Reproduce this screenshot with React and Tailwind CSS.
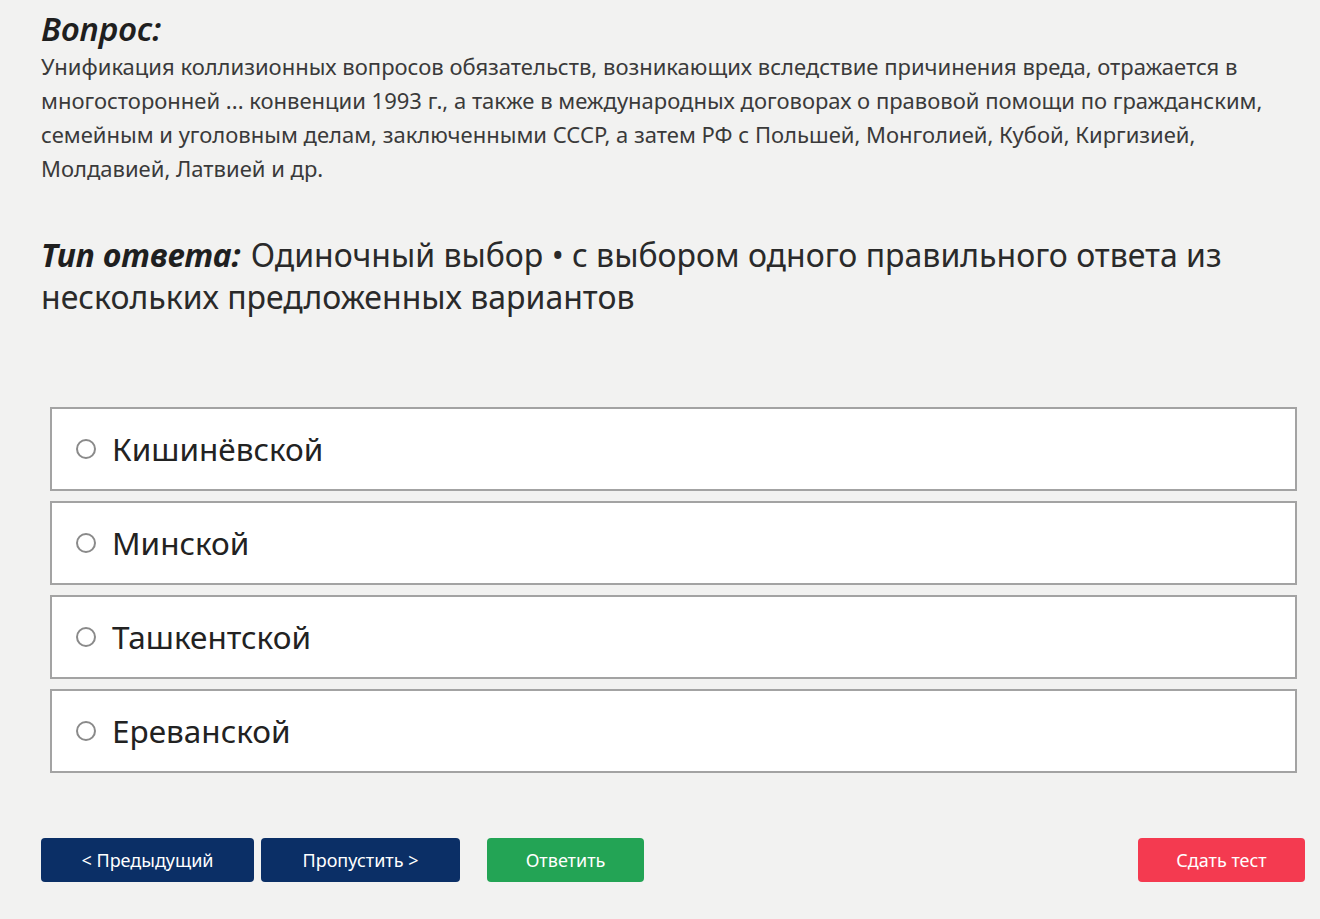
import React from 'react';

const options = ['Кишинёвской', 'Минской', 'Ташкентской', 'Ереванской'];

const Option = ({ label }) => {
  return (
    <label className="flex items-center h-[84px] bg-white border-2 border-[#a3a3a3] pl-[24px] cursor-pointer">
      <span className="w-[20px] h-[20px] rounded-full border-2 border-[#8a8a8a] bg-white shrink-0" />
      <span className="ml-[16px] text-[31.5px] text-[#222]">{label}</span>
    </label>
  );
};

const App = () => {
  return (
    <div className="min-h-[919px] bg-[#f2f2f1] font-['Noto_Sans',sans-serif] text-[#262626] px-[41px] pt-[9px]">
      <h2 className="text-[33px] font-semibold italic leading-[40px] text-[#1f1f1f]">Вопрос:</h2>
      <p className="text-[22px] leading-[34px] text-[#3a3a3a] max-w-[1240px]">
        Унификация коллизионных вопросов обязательств, возникающих вследствие причинения вреда, отражается в многосторонней ... конвенции 1993 г., а также в международных договорах о правовой помощи по гражданским, семейным и уголовным делам, заключенными СССР, а затем РФ с Польшей, Монголией, Кубой, Киргизией, Молдавией, Латвией и др.
      </p>

      <div className="mt-[49px] text-[32px] leading-[42px] text-[#2a2a2a]">
        <div className="flex">
          <span className="font-bold italic text-[#1f1f1f]">Тип ответа:</span>
          <span className="ml-[10px]">Одиночный выбор • с выбором одного правильного ответа из</span>
        </div>
        <div>нескольких предложенных вариантов</div>
      </div>

      <div className="mt-[89px] ml-[9px] mr-[-18px] flex flex-col gap-[10px]">
        {options.map((o) => (
          <Option key={o} label={o} />
        ))}
      </div>

      <div className="mt-[65px] flex items-center text-[18px] text-white">
        <button className="w-[213px] h-[44px] rounded-[4px] bg-[#0b2f66]">&lt; Предыдущий</button>
        <button className="ml-[7px] w-[199px] h-[44px] rounded-[4px] bg-[#0b2f66]">Пропустить &gt;</button>
        <button className="ml-[27px] w-[157px] h-[44px] rounded-[4px] bg-[#23a455]">Ответить</button>
        <button className="ml-auto mr-[-26px] w-[167px] h-[44px] rounded-[4px] bg-[#f43a50]">Сдать тест</button>
      </div>
    </div>
  );
};

export default App;
